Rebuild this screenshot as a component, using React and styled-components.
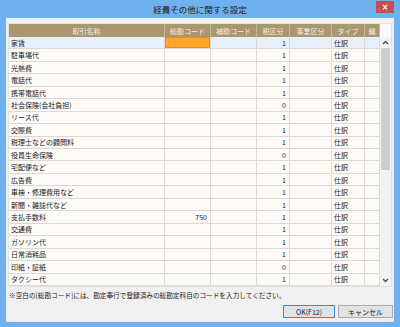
import React from 'react';
import styled, { createGlobalStyle } from 'styled-components';

const GlobalStyle = createGlobalStyle`
    html, body {
        margin: 0;
        padding: 0;
        background: #ffffff;
    }
    body {
        font-family: "Noto Sans CJK JP", "Liberation Sans", sans-serif;
    }
`

const Window = styled.div`
    width: 400px;
    height: 327px;
    box-sizing: border-box;
    background-color: #6fb1ee;
    padding: 0 6px 5px 6px;
    display: flex;
    flex-direction: column;
`

const TitleBar = styled.div`
    height: 18px;
    min-height: 18px;
    display: grid;
    grid-template-columns: 1fr auto 1fr;
    align-items: start;
`

const Title = styled.div`
    grid-column: 2;
    font-size: 8.5px;
    line-height: 18px;
    color: #1c1c1c;
    white-space: nowrap;
`

const CloseButton = styled.div`
    grid-column: 3;
    justify-self: end;
    width: 18px;
    height: 12px;
    margin-top: 1px;
    background-color: #c94f4f;
    color: #ffffff;
    font-family: "DejaVu Sans", sans-serif;
    font-size: 8px;
    font-weight: bold;
    display: flex;
    align-items: center;
    justify-content: center;
`

const Client = styled.div`
    flex: 1;
    background-color: #f0f0f0;
    padding: 5px 2px 0 2px;
    display: flex;
    flex-direction: column;
`

const Panel = styled.div`
    height: 264px;
    box-sizing: border-box;
    border: 1px solid #e2e2e2;
    background-color: #ffffff;
    display: flex;
`

const Grid = styled.div`
    width: 371px;
    display: grid;
    grid-template-columns: 156px 46px 46px 33px 42px 33px 15px;
    grid-template-rows: 13px repeat(20, 1fr);
`

const HeaderCell = styled.div`
    background-color: #a8976f;
    color: #f4efe2;
    font-size: 7px;
    display: flex;
    align-items: center;
    justify-content: center;
    border-right: 1px solid #c6b893;
    box-sizing: border-box;
    white-space: nowrap;
    overflow: hidden;
`

const Cell = styled.div`
    background-color: ${p => p.$orange ? '#ffa52a' : p.$selected ? '#e6effb' : '#fcfbf7'};
    color: #1a1a1a;
    font-size: 7px;
    display: flex;
    align-items: center;
    justify-content: ${p => p.$right ? 'flex-end' : 'flex-start'};
    padding: 0 3px 0 2px;
    box-sizing: border-box;
    border-right: 1px solid #dcd9d1;
    border-bottom: 1px solid #dcd9d1;
    white-space: nowrap;
    overflow: hidden;
    ${p => p.$orange && 'box-shadow: inset 0 0 0 1px #e9901c;'}
`

const ScrollBar = styled.div`
    width: 11px;
    display: flex;
    flex-direction: column;
    background-color: #f3f3f3;
`

const ScrollCorner = styled.div`
    height: 13px;
    background-color: #fafafa;
`

const Arrow = styled.div`
    height: 11px;
    display: flex;
    align-items: center;
    justify-content: center;
    color: #505050;
`

const Thumb = styled.div`
    height: 122px;
    margin: 0 1px;
    background-color: #cdcdcd;
`

const Track = styled.div`
    flex: 1;
`

const Note = styled.div`
    font-size: 6.65px;
    color: #1a1a1a;
    margin-top: 3px;
    padding-left: 1px;
    white-space: nowrap;
`

const ButtonRow = styled.div`
    margin-top: auto;
    margin-bottom: 4px;
    display: flex;
    justify-content: flex-end;
    gap: 3px;
    margin-right: -1px;
`

const Button = styled.div`
    width: ${p => p.$w}px;
    height: 13px;
    box-sizing: border-box;
    border: 1px solid ${p => p.$default ? '#3c8ad6' : '#acacac'};
    background-color: #e3e3e3;
    font-size: 7px;
    color: #1a1a1a;
    display: flex;
    align-items: center;
    justify-content: center;
`

const rows = [
    ['家賃', '', '1'],
    ['駐車場代', '', '1'],
    ['光熱費', '', '1'],
    ['電話代', '', '1'],
    ['携帯電話代', '', '1'],
    ['社会保険(会社負担)', '', '0'],
    ['リース代', '', '1'],
    ['交際費', '', '1'],
    ['税理士などの顧問料', '', '1'],
    ['役員生命保険', '', '0'],
    ['宅配便など', '', '1'],
    ['広告費', '', '1'],
    ['車検・修理費用など', '', '1'],
    ['新聞・雑誌代など', '', '1'],
    ['支払手数料', '750', '1'],
    ['交通費', '', '1'],
    ['ガソリン代', '', '1'],
    ['日常消耗品', '', '1'],
    ['印紙・証紙', '', '0'],
    ['タクシー代', '', '1'],
]

const headers = ['取引名称', '総勘コード', '補助コード', '税区分', '事業区分', 'タイプ', '編']

const ArrowIcon = ({ up }) => (
    <svg width="7" height="5" viewBox="0 0 7 5">
        <path d={up ? 'M1 4 L3.5 1.5 L6 4' : 'M1 1 L3.5 3.5 L6 1'} fill="none" stroke="#4a4a4a" strokeWidth="1.3" />
    </svg>
)

export default function App() {
    return (
        <Window>
            <GlobalStyle />
            <TitleBar>
                <Title>経費その他に関する設定</Title>
                <CloseButton>×</CloseButton>
            </TitleBar>
            <Client>
                <Panel>
                    <Grid>
                        {headers.map(h => <HeaderCell key={h}>{h}</HeaderCell>)}
                        {rows.map(([name, code, tax], i) => (
                            <React.Fragment key={name}>
                                <Cell $selected={i === 0}>{name}</Cell>
                                <Cell $selected={i === 0} $orange={i === 0} $right>{code}</Cell>
                                <Cell $selected={i === 0} />
                                <Cell $selected={i === 0} $right>{tax}</Cell>
                                <Cell $selected={i === 0} />
                                <Cell $selected={i === 0}>仕訳</Cell>
                                <Cell $selected={i === 0} />
                            </React.Fragment>
                        ))}
                    </Grid>
                    <ScrollBar>
                        <ScrollCorner />
                        <Arrow><ArrowIcon up /></Arrow>
                        <Thumb />
                        <Track />
                        <Arrow><ArrowIcon /></Arrow>
                    </ScrollBar>
                </Panel>
                <Note>※空白の[総勘コード]には、勘定奉行で登録済みの総勘定科目のコードを入力してください。</Note>
                <ButtonRow>
                    <Button $default $w={52}>OK(F12)</Button>
                    <Button $w={55}>キャンセル</Button>
                </ButtonRow>
            </Client>
        </Window>
    );
}
